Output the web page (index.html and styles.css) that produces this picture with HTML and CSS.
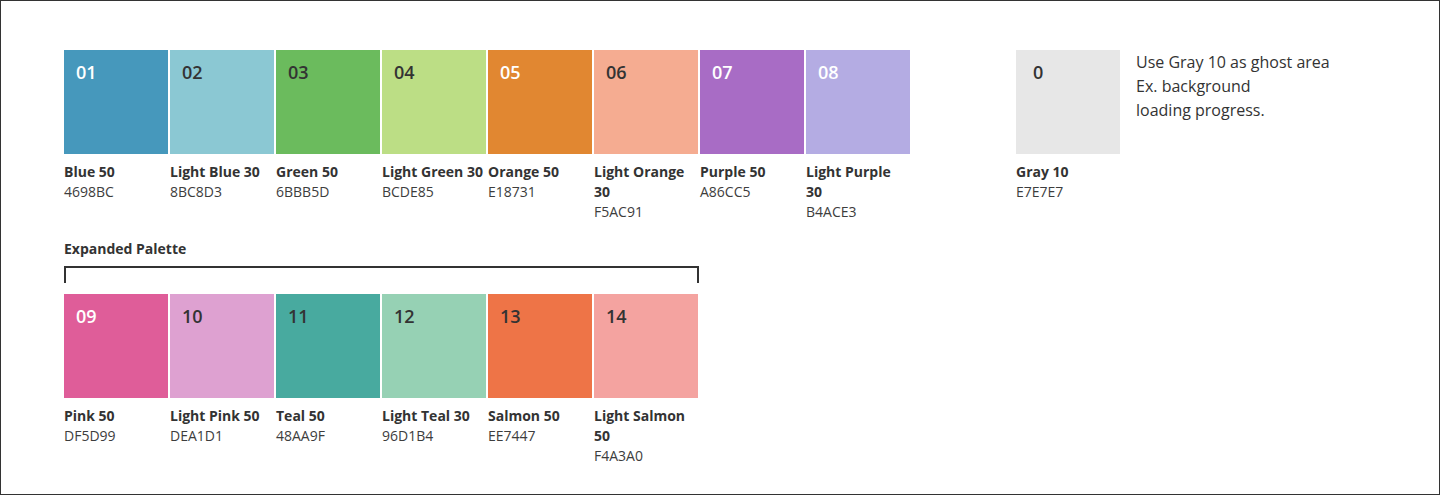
FILE: index.html
```html
<!DOCTYPE html>
<html lang="en">
<head>
<meta charset="utf-8">
<title>Palette</title>
<link rel="stylesheet" href="styles.css">
</head>
<body>
<div class="frame">
  <div class="top">
    <div class="palette">
      <div class="item"><div class="swatch light-num" style="background:#4698BC">01</div><div class="name">Blue 50</div><div class="hex">4698BC</div></div>
      <div class="item"><div class="swatch" style="background:#8BC8D3">02</div><div class="name">Light Blue 30</div><div class="hex">8BC8D3</div></div>
      <div class="item"><div class="swatch" style="background:#6BBB5D">03</div><div class="name">Green 50</div><div class="hex">6BBB5D</div></div>
      <div class="item"><div class="swatch" style="background:#BCDE85">04</div><div class="name">Light Green 30</div><div class="hex">BCDE85</div></div>
      <div class="item"><div class="swatch light-num" style="background:#E18731">05</div><div class="name">Orange 50</div><div class="hex">E18731</div></div>
      <div class="item"><div class="swatch" style="background:#F5AC91">06</div><div class="name">Light Orange 30</div><div class="hex">F5AC91</div></div>
      <div class="item"><div class="swatch light-num" style="background:#A86CC5">07</div><div class="name">Purple 50</div><div class="hex">A86CC5</div></div>
      <div class="item"><div class="swatch light-num" style="background:#B4ACE3">08</div><div class="name">Light Purple 30</div><div class="hex">B4ACE3</div></div>
    </div>
    <div class="ghost">
      <div class="item"><div class="swatch gray" style="background:#E7E7E7">0</div><div class="name">Gray 10</div><div class="hex">E7E7E7</div></div>
      <p class="note">Use Gray 10 as ghost area<br>Ex. background<br>loading progress.</p>
    </div>
  </div>
  <div class="expanded">
    <div class="heading">Expanded Palette</div>
    <div class="bracket"></div>
    <div class="palette">
      <div class="item"><div class="swatch light-num" style="background:#DF5D99">09</div><div class="name">Pink 50</div><div class="hex">DF5D99</div></div>
      <div class="item"><div class="swatch" style="background:#DEA1D1">10</div><div class="name">Light Pink 50</div><div class="hex">DEA1D1</div></div>
      <div class="item"><div class="swatch" style="background:#48AA9F">11</div><div class="name">Teal 50</div><div class="hex">48AA9F</div></div>
      <div class="item"><div class="swatch" style="background:#96D1B4">12</div><div class="name">Light Teal 30</div><div class="hex">96D1B4</div></div>
      <div class="item"><div class="swatch" style="background:#EE7447">13</div><div class="name">Salmon 50</div><div class="hex">EE7447</div></div>
      <div class="item"><div class="swatch" style="background:#F4A3A0">14</div><div class="name">Light Salmon 50</div><div class="hex">F4A3A0</div></div>
    </div>
  </div>
</div>
</body>
</html>
```
FILE: styles.css
```css
* { box-sizing: border-box; }
html, body { margin: 0; padding: 0; background: #fff; }
body { font-family: "Open Sans", "Liberation Sans", sans-serif; color: #333; }
.frame {
  width: 1440px;
  height: 495px;
  border: 1px solid #333;
  padding: 49px 0 0 63px;
}
.top { display: flex; align-items: flex-start; }
.palette { display: flex; gap: 2px; align-items: flex-start; }
.item { width: 104px; }
.swatch {
  width: 104px;
  height: 104px;
  padding: 10px 12px 0;
  font-size: 18px;
  font-weight: 600;
  line-height: 24px;
  color: #333;
}
.swatch.light-num { color: #fff; }
.swatch.gray { padding-left: 17px; }
.name {
  margin-top: 8px;
  font-size: 14px;
  font-weight: 700;
  line-height: 20px;
  color: #333;
}
.hex {
  font-size: 14px;
  line-height: 20px;
  color: #3d3d3d;
}
.ghost { display: flex; gap: 16px; margin-left: 106px; }
.note {
  margin: 0;
  font-size: 16px;
  line-height: 24px;
  color: #333;
}
.expanded { margin-top: 17px; }
.heading {
  font-size: 14px;
  font-weight: 700;
  line-height: 20px;
  color: #333;
}
.bracket {
  width: 635px;
  height: 17px;
  margin-top: 7px;
  border: 2px solid #333;
  border-bottom: 0;
  margin-bottom: 11px;
}
```
